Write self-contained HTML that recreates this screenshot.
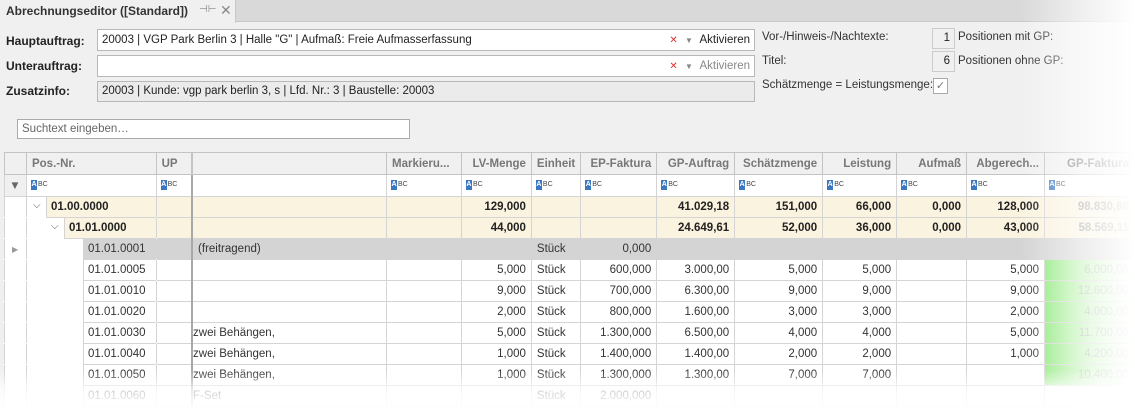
<!DOCTYPE html>
<html><head><meta charset="utf-8"><style>
*{box-sizing:border-box;margin:0;padding:0}
body{width:1135px;height:410px;overflow:hidden;background:#f0f0f0;font-family:"Liberation Sans","DejaVu Sans",sans-serif;font-size:12px;color:#222;position:relative}
.abs{position:absolute}
.lbl{position:absolute;font-weight:bold;font-size:12px;color:#222}
.inp{position:absolute;background:#fff;border:1px solid #b8b8b8;padding-left:4px;line-height:20px;font-size:11.5px}
.rt{position:absolute;font-size:11.5px;color:#333}
table{position:absolute;left:4px;top:152px;border-collapse:collapse;table-layout:fixed;background:#fff}
td{height:21px;border:1px solid #d4d4d4;padding:0 5px;white-space:nowrap;overflow:hidden;font-size:11.5px;text-align:right;color:#333}
tr.h td{background:#f0f0f0;color:#777;font-weight:bold;height:22px;border-color:#c4c4c4}
tr.f td{height:22px;text-align:left;padding-left:4px}
.abc{display:inline-block;font-size:7px;color:#444;vertical-align:middle}
.abc b{display:inline-block;background:#3c78c0;color:#fff;width:6px;height:10px;line-height:10px;text-align:center;margin-right:1px;font-size:7px}
tr.y td{background:#faf3df;font-weight:bold;color:#222}
tr.g td{background:#d4d4d4}
td.l{text-align:left}
td.sep{border-left:2px solid #a8a8a8}
td.gut{background:#fff;border-right:1px solid #d4d4d4;border-top-color:#fff;border-bottom-color:#fff}
td.p{padding:0;text-align:left;position:relative;overflow:visible;border-top-color:#fff;border-bottom-color:#fff}
td.p div{position:absolute;top:-1px;bottom:-1px;right:0;line-height:21px;padding-left:4px;border-top:1px solid #d4d4d4;border-bottom:1px solid #d4d4d4;border-left:1px solid #d4d4d4}
td.gr{background:linear-gradient(90deg,#8de87a,#c8f5bd 60%,#f0fff0);color:#aaa}
</style></head><body>
<div class="abs" style="left:0;top:0;width:1135px;height:22px;background:#d9d9d9;border-bottom:1px solid #c8c8c8"></div>
<div class="abs" style="left:0;top:0;width:236px;height:23px;background:#f0f0f0;border-right:1px solid #c8c8c8"></div>
<div class="abs" style="left:6px;top:4px;font-weight:bold;font-size:12px;color:#333">Abrechnungseditor ([Standard])</div>
<div class="abs" style="left:199px;top:4px;font-size:10px;color:#888">⊣⊢</div>
<div class="abs" style="left:220px;top:2px;font-size:14px;color:#888">✕</div>

<div class="lbl" style="left:6px;top:34px">Hauptauftrag:</div>
<div class="lbl" style="left:6px;top:59px">Unterauftrag:</div>
<div class="lbl" style="left:6px;top:84px">Zusatzinfo:</div>
<div class="inp" style="left:97px;top:29px;width:658px;height:22px">20003 | VGP Park Berlin 3 | Halle "G" | Aufmaß: Freie Aufmasserfassung
<span class="abs" style="right:4px;top:0"><span style="color:#d33;font-size:10px">✕</span> <span style="color:#888;font-size:8px;margin:0 4px">▼</span> Aktivieren</span></div>
<div class="inp" style="left:97px;top:55px;width:658px;height:22px">
<span class="abs" style="right:4px;top:0;color:#888"><span style="color:#d33;font-size:10px">✕</span> <span style="font-size:8px;margin:0 4px">▼</span> Aktivieren</span></div>
<div class="inp" style="left:97px;top:81px;width:658px;height:21px;background:#ebebeb;line-height:19px">20003 | Kunde: vgp park berlin 3, s | Lfd. Nr.: 3 | Baustelle: 20003</div>

<div class="rt" style="left:762px;top:31px">Vor-/Hinweis-/Nachtexte:</div>
<div class="rt" style="left:762px;top:55px">Titel:</div>
<div class="rt" style="left:762px;top:79px">Schätzmenge = Leistungsmenge:</div>
<div class="abs" style="left:932px;top:28px;width:23px;height:21px;border:1px solid #ccc;text-align:right;padding-right:4px;line-height:19px;font-size:11.5px">1</div>
<div class="abs" style="left:932px;top:51px;width:23px;height:21px;border:1px solid #ccc;text-align:right;padding-right:4px;line-height:19px;font-size:11.5px">6</div>
<div class="rt" style="left:958px;top:31px">Positionen mit GP:</div>
<div class="rt" style="left:958px;top:55px">Positionen ohne GP:</div>
<div class="abs" style="left:933px;top:78px;width:15px;height:16px;border:1px solid #aaa;background:#fff;font-size:11px;color:#777;text-align:center;line-height:14px">✓</div>

<div class="inp" style="left:17px;top:119px;width:393px;height:20px;border-color:#aaa;line-height:18px;color:#666">Suchtext eingeben…</div>

<table>
<colgroup><col style="width:22px"><col style="width:130px"><col style="width:36px"><col style="width:195px"><col style="width:75px"><col style="width:70px"><col style="width:49px"><col style="width:76px"><col style="width:78px"><col style="width:88px"><col style="width:74px"><col style="width:70px"><col style="width:78px"><col style="width:90px"></colgroup>
<tr class="h"><td></td><td class="l">Pos.-Nr.</td><td class="l">UP</td><td class="sep"></td><td class="l">Markieru...</td><td>LV-Menge</td><td class="l">Einheit</td><td>EP-Faktura</td><td>GP-Auftrag</td><td>Schätzmenge</td><td>Leistung</td><td>Aufmaß</td><td>Abgerech...</td><td>GP-Faktura</td></tr>
<tr class="f"><td style="background:#f0f0f0;color:#666;text-align:center">▼</td><td><span class="abc"><b>A</b>BC</span></td><td><span class="abc"><b>A</b>BC</span></td><td class="sep"></td><td><span class="abc"><b>A</b>BC</span></td><td><span class="abc"><b>A</b>BC</span></td><td><span class="abc"><b>A</b>BC</span></td><td><span class="abc"><b>A</b>BC</span></td><td><span class="abc"><b>A</b>BC</span></td><td><span class="abc"><b>A</b>BC</span></td><td><span class="abc"><b>A</b>BC</span></td><td><span class="abc"><b>A</b>BC</span></td><td><span class="abc"><b>A</b>BC</span></td><td><span class="abc"><b>A</b>BC</span></td></tr>
<tr class="y"><td class="gut" style="background:#fff"></td><td class="p" style="background:#fff"><span class="abs" style="left:6px;top:3px;font-weight:normal;color:#555;font-size:10px">⌵</span><div style="left:19px;background:#faf3df">01.00.0000</div></td><td></td><td class="sep"></td><td></td><td>129,000</td><td></td><td></td><td>41.029,18</td><td>151,000</td><td>66,000</td><td>0,000</td><td>128,000</td><td style="color:#999">98.830,88</td></tr>
<tr class="y"><td class="gut" style="background:#fff"></td><td class="p" style="background:#fff"><span class="abs" style="left:24px;top:3px;font-weight:normal;color:#555;font-size:10px">⌵</span><div style="left:37px;background:#faf3df">01.01.0000</div></td><td></td><td class="sep"></td><td></td><td>44,000</td><td></td><td></td><td>24.649,61</td><td>52,000</td><td>36,000</td><td>0,000</td><td>43,000</td><td style="color:#999">58.569,11</td></tr>
<tr class="g"><td class="gut" style="background:#fff;color:#999;font-size:8px;text-align:left;padding-left:7px">▶</td><td class="p" style="background:#fff"><div style="left:56px;background:#d4d4d4">01.01.0001</div></td><td></td><td class="sep l">(freitragend)</td><td></td><td></td><td class="l">Stück</td><td>0,000</td><td></td><td></td><td></td><td></td><td></td><td></td></tr>
<tr><td class="gut"></td><td class="p"><div style="left:56px">01.01.0005</div></td><td></td><td class="sep"></td><td></td><td>5,000</td><td class="l">Stück</td><td>600,000</td><td>3.000,00</td><td>5,000</td><td>5,000</td><td></td><td>5,000</td><td class="gr">6.000,00</td></tr>
<tr><td class="gut"></td><td class="p"><div style="left:56px">01.01.0010</div></td><td></td><td class="sep"></td><td></td><td>9,000</td><td class="l">Stück</td><td>700,000</td><td>6.300,00</td><td>9,000</td><td>9,000</td><td></td><td>9,000</td><td class="gr">12.600,00</td></tr>
<tr><td class="gut"></td><td class="p"><div style="left:56px">01.01.0020</div></td><td></td><td class="sep"></td><td></td><td>2,000</td><td class="l">Stück</td><td>800,000</td><td>1.600,00</td><td>3,000</td><td>3,000</td><td></td><td>2,000</td><td class="gr">4.000,00</td></tr>
<tr><td class="gut"></td><td class="p"><div style="left:56px">01.01.0030</div></td><td></td><td class="sep l" style="padding-left:0">zwei Behängen,</td><td></td><td>5,000</td><td class="l">Stück</td><td>1.300,000</td><td>6.500,00</td><td>4,000</td><td>4,000</td><td></td><td>5,000</td><td class="gr">11.700,00</td></tr>
<tr><td class="gut"></td><td class="p"><div style="left:56px">01.01.0040</div></td><td></td><td class="sep l" style="padding-left:0">zwei Behängen,</td><td></td><td>1,000</td><td class="l">Stück</td><td>1.400,000</td><td>1.400,00</td><td>2,000</td><td>2,000</td><td></td><td>1,000</td><td class="gr">4.200,00</td></tr>
<tr><td class="gut"></td><td class="p"><div style="left:56px">01.01.0050</div></td><td></td><td class="sep l" style="padding-left:0">zwei Behängen,</td><td></td><td>1,000</td><td class="l">Stück</td><td>1.300,000</td><td>1.300,00</td><td>7,000</td><td>7,000</td><td></td><td></td><td class="gr">10.400,00</td></tr>
<tr><td class="gut"></td><td class="p"><div style="left:56px">01.01.0060</div></td><td></td><td class="sep l" style="padding-left:0">F-Set</td><td></td><td></td><td class="l">Stück</td><td>2.000,000</td><td></td><td></td><td></td><td></td><td></td><td></td></tr>
</table>
<div class="abs" style="left:0;top:370px;width:1135px;height:40px;background:linear-gradient(180deg,rgba(255,255,255,0),rgba(255,255,255,0.75) 50%,#fff)"></div>
<div class="abs" style="left:1020px;top:0;width:115px;height:410px;background:linear-gradient(90deg,rgba(255,255,255,0),rgba(255,255,255,0.6) 55%,#fff)"></div>
</body></html>
